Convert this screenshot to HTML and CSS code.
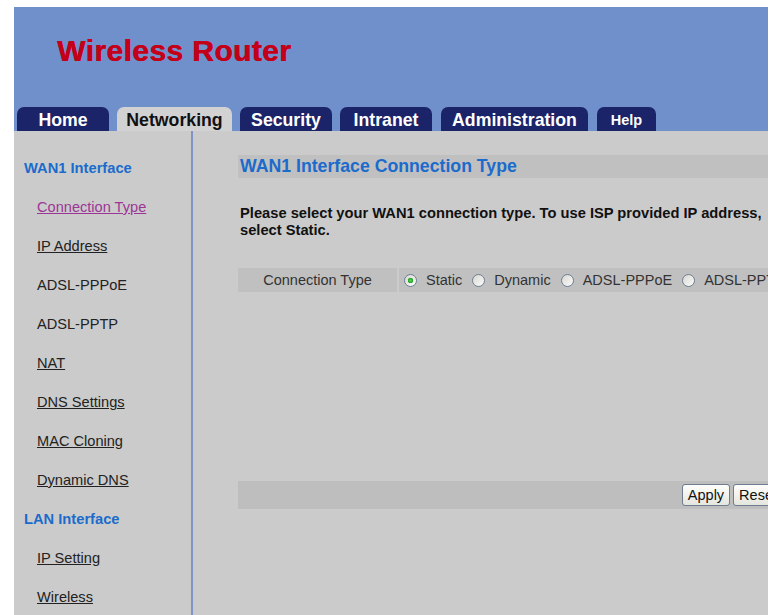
FILE: index.html
```html
<!DOCTYPE html>
<html lang="en">
<head>
  <meta charset="UTF-8">
  <title>Wireless Router</title>
  <meta name="viewport" content="width=device-width, initial-scale=1">
  <link rel="stylesheet" href="styles.css">
</head>
<body>
  <div class="frame">
    <!-- ヘッダー：ロゴとメニュータブ -->
    <div class="header">
      <div class="logo">Wireless Router</div>
      <ul class="tabs">
        <li class="tab tab-home"><a href="#">Home</a></li>
        <li class="tab tab-net active"><a href="#">Networking</a></li>
        <li class="tab tab-sec"><a href="#">Security</a></li>
        <li class="tab tab-intra"><a href="#">Intranet</a></li>
        <li class="tab tab-admin"><a href="#">Administration</a></li>
        <li class="tab tab-help"><a href="#">Help</a></li>
      </ul>
    </div>

    <div class="main">
      <!-- 左メニュー -->
      <div class="sidebar">
        <div class="side-head">WAN1 Interface</div>
        <a class="side-link visited" href="#">Connection Type</a>
        <a class="side-link" href="#">IP Address</a>
        <span class="side-link plain">ADSL-PPPoE</span>
        <span class="side-link plain">ADSL-PPTP</span>
        <a class="side-link" href="#">NAT</a>
        <a class="side-link" href="#">DNS Settings</a>
        <a class="side-link" href="#">MAC Cloning</a>
        <a class="side-link" href="#">Dynamic DNS</a>
        <div class="side-head">LAN Interface</div>
        <a class="side-link" href="#">IP Setting</a>
        <a class="side-link" href="#">Wireless</a>
      </div>

      <!-- 設定画面 -->
      <div class="pane">
        <div class="pane-inner">
          <h2 class="pane-title">WAN1 Interface Connection Type</h2>
          <p class="intro">Please select your WAN1 connection type. To use ISP provided IP address, select Static.</p>

          <div class="field-row">
            <div class="field-label">Connection Type</div>
            <div class="field-value">
              <label class="opt"><input type="radio" name="conn" checked>Static</label>
              <label class="opt"><input type="radio" name="conn">Dynamic</label>
              <label class="opt"><input type="radio" name="conn">ADSL-PPPoE</label>
              <label class="opt"><input type="radio" name="conn">ADSL-PPTP</label>
            </div>
          </div>

          <div class="button-bar">
            <button type="button">Apply</button>
            <button type="button">Reset</button>
          </div>
        </div>
      </div>
    </div>
  </div>
</body>
</html>
```

FILE: styles.css
```css
/* 基本設定 */
* {
  box-sizing: border-box;
  margin: 0;
  padding: 0;
}
body {
  font-family: 'Liberation Sans', Arial, sans-serif;
  background: #fff;
  color: #222;
}
.frame {
  margin: 7px 0 0 14px;
  width: 754px;
  height: 608px;
  overflow: hidden;
  background: #cbcbcb;
  display: flex;
  flex-direction: column;
}

/* ヘッダー */
.header {
  height: 124px;
  background: #7090cc;
  display: flex;
  flex-direction: column;
  flex-shrink: 0;
}
.logo {
  padding: 29px 0 0 43px;
  font-size: 30px;
  line-height: 30px;
  font-weight: bold;
  letter-spacing: 0.4px;
  color: #c40018;
  text-shadow: 0.6px 0 0 #c40018;
}
.tabs {
  list-style: none;
  display: flex;
  margin-top: auto;
  padding-left: 3px;
}
.tab {
  height: 24px;
  margin-right: 8px;
  background: #1b2468;
  border-radius: 7px 7px 0 0;
  text-align: center;
}
.tab a {
  display: block;
  padding-top: 2px;
  line-height: 22px;
  font-size: 17.7px;
  font-weight: bold;
  color: #fff;
  text-decoration: none;
}
.tab.active {
  background: #d2d2d2;
}
.tab.active a {
  color: #111;
}
.tab-home { width: 92px; }
.tab-net { width: 115px; }
.tab-sec { width: 92px; }
.tab-intra { width: 92px; margin-right: 9px; }
.tab-admin { width: 147px; margin-right: 9px; }
.tab-help { width: 59px; }
.tab-help a {
  font-size: 14.5px;
}

/* 本体 */
.main {
  flex: 1;
  display: flex;
  overflow: hidden;
}
.sidebar {
  width: 179px;
  flex-shrink: 0;
  padding-top: 18px;
  border-right: 2px solid #8092c6;
}
.side-head {
  padding-left: 10px;
  line-height: 39px;
  font-size: 14.7px;
  font-weight: bold;
  color: #1b6bcc;
}
.side-link {
  display: block;
  padding-left: 23px;
  line-height: 39px;
  font-size: 14.6px;
  color: #222;
  text-decoration: underline;
}
.side-link.visited {
  color: #9c3696;
}
.side-link.plain {
  text-decoration: none;
}

.pane {
  flex-shrink: 0;
  padding-left: 45px;
}
.pane-inner {
  width: 548px;
}
.pane-title {
  margin-top: 24px;
  height: 23px;
  line-height: 23px;
  padding-left: 2px;
  background: #c0c0c0;
  font-size: 17.7px;
  font-weight: bold;
  color: #1b6bcc;
}
.intro {
  margin-top: 27px;
  padding-left: 2px;
  font-size: 14.7px;
  line-height: 17px;
  font-weight: bold;
  color: #111;
}

/* 接続タイプ選択 */
.field-row {
  margin-top: 29px;
  display: flex;
  gap: 2px;
  height: 24px;
}
.field-label {
  width: 159px;
  flex-shrink: 0;
  background: #c0c0c0;
  text-align: center;
  line-height: 24px;
  font-size: 14.5px;
  color: #333;
}
.field-value {
  flex: 1;
  background: #c0c0c0;
  display: flex;
  align-items: center;
  padding-left: 5px;
  font-size: 14.5px;
  color: #333;
  white-space: nowrap;
}
.opt {
  display: inline-flex;
  align-items: center;
  margin-right: 10px;
}
.opt input[type="radio"] {
  appearance: none;
  -webkit-appearance: none;
  width: 13px;
  height: 13px;
  margin-right: 9px;
  border: 1px solid #6e7f98;
  border-radius: 50%;
  background: linear-gradient(135deg, #d8d8d2, #fbfbf9);
}
.opt input[type="radio"]:checked {
  background: radial-gradient(circle, #5ed35e 0, #21a121 2.5px, transparent 3px), linear-gradient(135deg, #d8d8d2, #fbfbf9);
}

/* ボタン */
.button-bar {
  margin-top: 189px;
  height: 28px;
  background: #bebebe;
  display: flex;
  justify-content: flex-end;
  align-items: center;
  gap: 3px;
  padding-right: 3px;
}
.button-bar button {
  height: 22px;
  padding: 0 5px;
  font-family: 'Liberation Sans', Arial, sans-serif;
  font-size: 14.5px;
  color: #111;
  border: 1px solid #6f7d8f;
  border-radius: 3px;
  background: linear-gradient(#fdfdfb, #e6e6e0);
}
```
